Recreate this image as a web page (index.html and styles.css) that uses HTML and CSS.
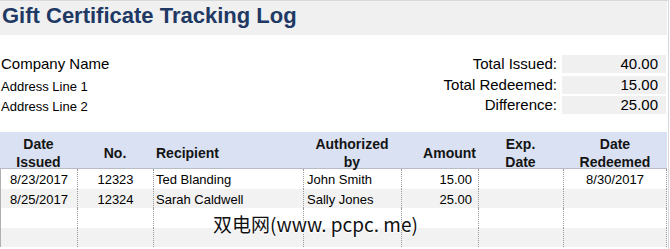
FILE: index.html
```html
<!DOCTYPE html>
<html lang="en">
<head>
<meta charset="utf-8">
<title>Gift Certificate Tracking Log</title>
<link rel="stylesheet" href="styles.css">
</head>
<body>
<div class="page">
  <h1 class="title">Gift Certificate Tracking Log</h1>

  <div class="info">
    <div class="company">Company Name</div>
    <div class="label">Total Issued:</div>
    <div class="value">40.00</div>
    <div class="address">Address Line 1</div>
    <div class="label">Total Redeemed:</div>
    <div class="value">15.00</div>
    <div class="address">Address Line 2</div>
    <div class="label">Difference:</div>
    <div class="value">25.00</div>
  </div>

  <div class="log">
    <div class="row head">
      <div class="c center">Date<br>Issued</div>
      <div class="c center">No.</div>
      <div class="c left">Recipient</div>
      <div class="c center">Authorized<br>by</div>
      <div class="c right-h">Amount</div>
      <div class="c center">Exp.<br>Date</div>
      <div class="c center">Date<br>Redeemed</div>
    </div>
    <div class="row data">
      <div class="c center">8/23/2017</div>
      <div class="c center">12323</div>
      <div class="c left">Ted Blanding</div>
      <div class="c left2">John Smith</div>
      <div class="c right">15.00</div>
      <div class="c center"></div>
      <div class="c center">8/30/2017</div>
    </div>
    <div class="row data alt">
      <div class="c center">8/25/2017</div>
      <div class="c center">12324</div>
      <div class="c left">Sarah Caldwell</div>
      <div class="c left2">Sally Jones</div>
      <div class="c right">25.00</div>
      <div class="c center"></div>
      <div class="c center"></div>
    </div>
    <div class="row data">
      <div class="c"></div><div class="c"></div><div class="c"></div><div class="c"></div><div class="c"></div><div class="c"></div><div class="c"></div>
    </div>
    <div class="row data alt">
      <div class="c"></div><div class="c"></div><div class="c"></div><div class="c"></div><div class="c"></div><div class="c"></div><div class="c"></div>
    </div>
  </div>

  <div class="watermark">双电网(www. pcpc. me)</div>
</div>
</body>
</html>
```
FILE: styles.css
```css
html, body {
  margin: 0;
  padding: 0;
  background: #ffffff;
}

body {
  font-family: "Liberation Sans", Arial, sans-serif;
  color: #000;
}

.page {
  position: relative;
  width: 668px;
  height: 248px;
  border-top: 1px solid #d9d9d9;
  border-right: 1px solid #d9d9d9;
  overflow: hidden;
}

.title {
  margin: 0 1px 0 0;
  height: 34px;
  box-sizing: border-box;
  padding: 0 0 4px 2px;
  background: #f0f0f0;
  color: #203864;
  font-size: 22px;
  font-weight: bold;
  line-height: 30px;
  white-space: nowrap;
}

.info {
  display: grid;
  grid-template-columns: 1fr auto 104px;
  grid-template-rows: 18px 18px 18px;
  column-gap: 5px;
  row-gap: 2.5px;
  margin-top: 20px;
  padding-right: 2px;
}

.company {
  font-size: 15px;
  line-height: 18px;
  padding-left: 1px;
}

.address {
  font-size: 13px;
  line-height: 22px;
  padding-left: 1px;
}

.label {
  font-size: 15px;
  line-height: 18px;
  text-align: right;
}

.value {
  background: #f0f0f0;
  font-size: 15px;
  line-height: 18px;
  text-align: right;
  padding-right: 8px;
}

.log {
  margin-top: 18px;
  width: 667px;
}

.row {
  display: grid;
  grid-template-columns: 77px 76px 150px 98px 77px 85px 104px;
}

.head {
  height: 37px;
  box-sizing: border-box;
  padding-top: 3px;
  background: #d9e1f2;
  border-bottom: 1px solid #b8bcc4;
  font-size: 14px;
  font-weight: bold;
  color: #141414;
  line-height: 18px;
}

.head .c {
  display: flex;
  flex-direction: column;
  justify-content: center;
  white-space: nowrap;
}

.data {
  height: 19.5px;
  font-size: 13px;
}

.data .c {
  box-sizing: border-box;
  height: 19.5px;
  padding-top: 3px;
  line-height: 16.5px;
  border-left: 1px dotted #9a9a9a;
  white-space: nowrap;
  overflow: hidden;
}

.data .c:last-child {
  border-right: 1px dotted #9a9a9a;
}

.data .c:first-child {
  border-left: 1px solid #b0b0b0;
}

.alt {
  background: #f2f2f2;
}

.center {
  text-align: center;
}

.head .center {
  align-items: center;
}

.left {
  padding-left: 2px;
}

.head .left {
  padding-left: 3px;
}

.left2 {
  padding-left: 3px;
}

.right {
  text-align: right;
  padding-right: 6px;
}

.right-h {
  align-items: flex-end;
  padding-right: 2px;
}

.watermark {
  position: absolute;
  left: 213px;
  top: 212px;
  font-family: "Noto Sans CJK SC", "Noto Sans", sans-serif;
  font-size: 19px;
  line-height: 22px;
  color: #111;
  white-space: nowrap;
  text-shadow: 1px 0 0 #fff, -1px 0 0 #fff, 0 1px 0 #fff, 0 -1px 0 #fff;
}
```
